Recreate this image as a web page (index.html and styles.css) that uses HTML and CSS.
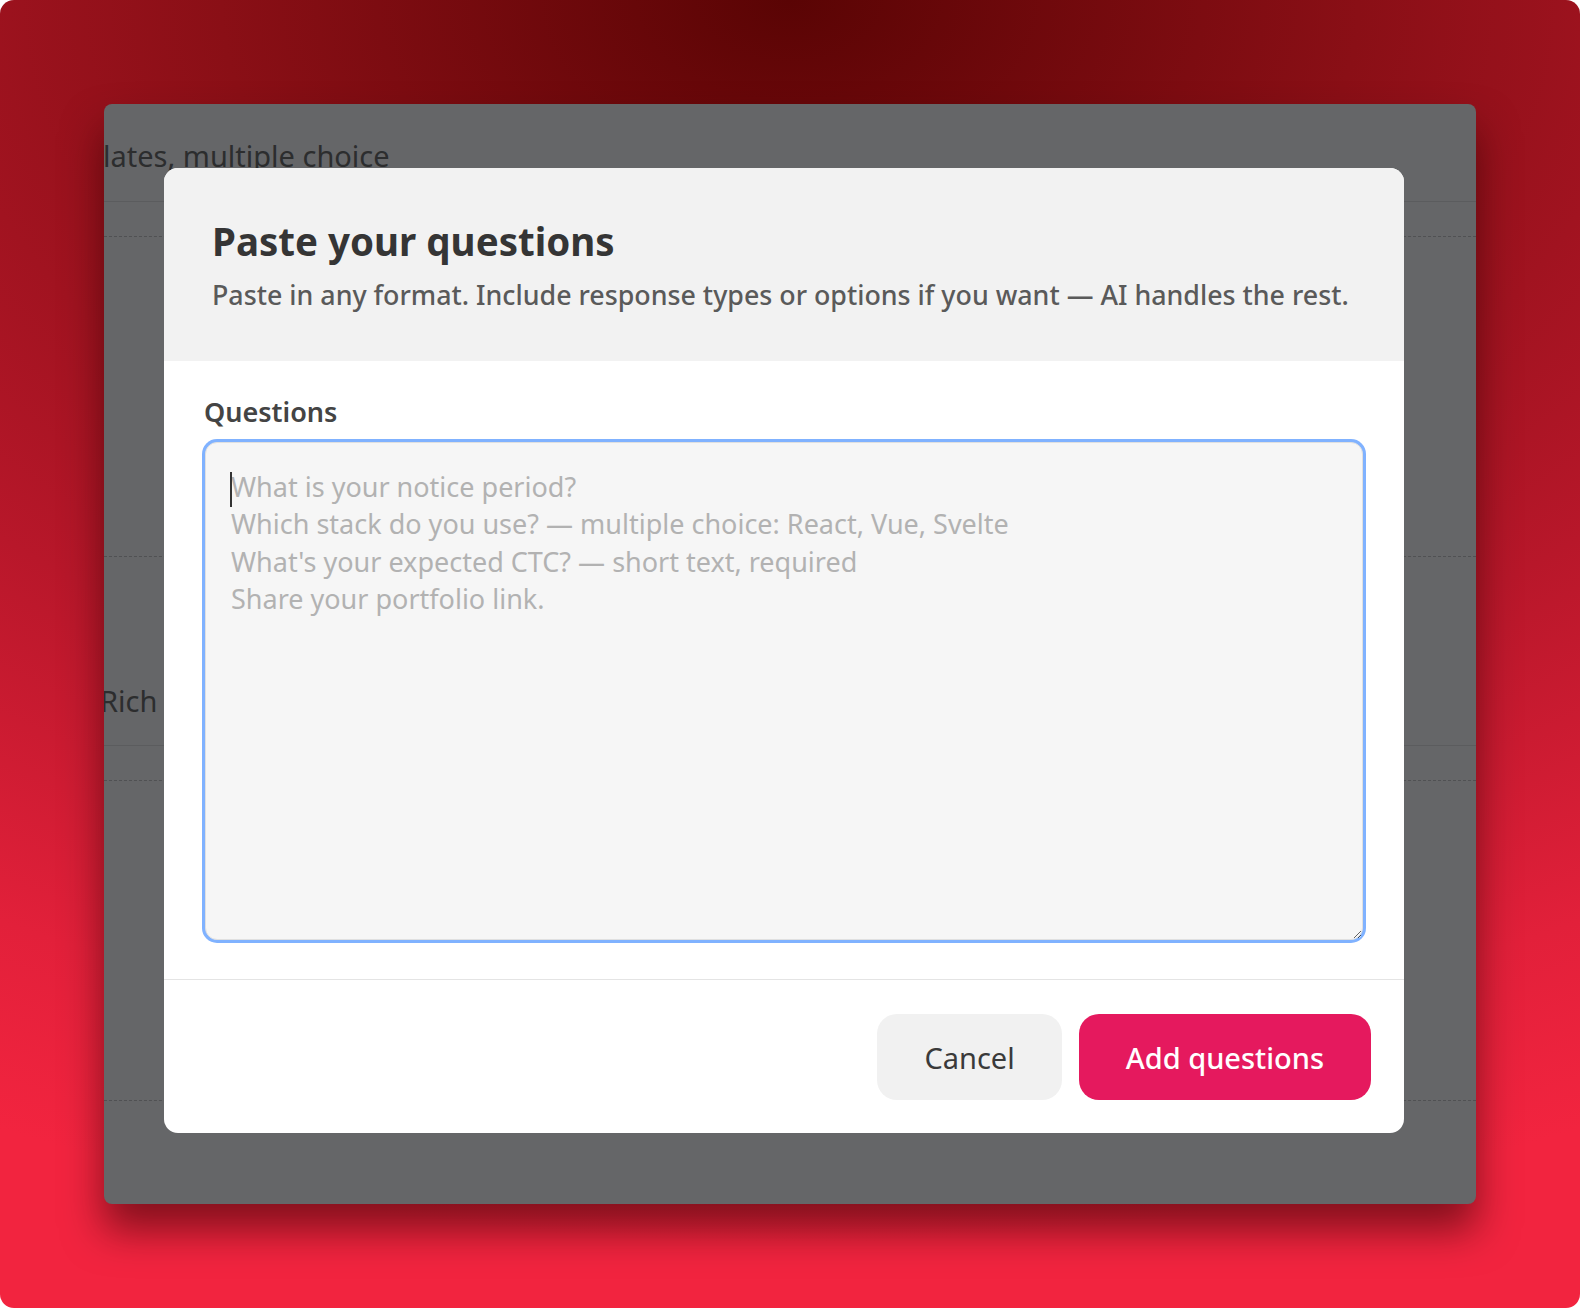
FILE: index.html
```html
<!DOCTYPE html>
<html lang="en">
<head>
  <meta charset="UTF-8">
  <meta name="viewport" content="width=device-width, initial-scale=1.0">
  <title>Paste your questions</title>
  <link rel="stylesheet" href="styles.css">
</head>
<body>
  <div class="frame">
    <div class="window">
      <!-- page behind the dialog, dimmed -->
      <div class="page">
        <div class="page-row first">lates, multiple choice</div>
        <div class="page-block"></div>
        <div class="page-row second">Rich text</div>
        <div class="page-block"></div>
      </div>

      <div class="modal">
        <div class="modal-head">
          <h1>Paste your questions</h1>
          <p>Paste in any format. Include response types or options if you want — AI handles the rest.</p>
        </div>

        <div class="modal-body">
          <label for="questions">Questions</label>
          <div class="field">
            <textarea id="questions" placeholder="What is your notice period?&#10;Which stack do you use? — multiple choice: React, Vue, Svelte&#10;What's your expected CTC? — short text, required&#10;Share your portfolio link."></textarea>
            <span class="caret"></span>
          </div>
        </div>

        <div class="modal-foot">
          <button class="btn btn-cancel">Cancel</button>
          <button class="btn btn-add">Add questions</button>
        </div>
      </div>
    </div>
  </div>
</body>
</html>
```

FILE: styles.css
```css
* {
  box-sizing: border-box;
}
html, body {
  margin: 0;
  background: #fff;
}
body {
  font-family: "Noto Sans", "Open Sans", sans-serif;
}
.frame {
  width: 1580px;
  height: 1308px;
  border-radius: 14px;
  padding: 104px;
  background: radial-gradient(ellipse 120% 95% at 50% 0%, #5a0404 0%, #8a0f16 30%, #b8172a 60%, #e2203a 85%, #f2243f 100%);
}
.window {
  position: relative;
  height: 1100px;
  background: #656668;
  border-radius: 8px;
  box-shadow: 0 26px 40px rgba(40, 0, 0, 0.55);
}
.page {
  height: 100%;
  overflow: hidden;
  border-radius: 8px;
  color: #2c2d2e;
  font-size: 29px;
}
.page-row {
  line-height: 40px;
  border-bottom: 1px solid #5b5c5e;
}
.page-row.first {
  padding: 32px 0 25px;
  margin-left: -1px;
}
.page-row.second {
  padding: 124px 0 24px;
  margin-left: -4px;
}
.page-block {
  margin-top: 34px;
  height: 321px;
  border-top: 1px dashed #505153;
  border-bottom: 1px dashed #505153;
}

/* dialog */
.modal {
  position: absolute;
  left: 60px;
  top: 64px;
  width: 1240px;
  background: #fff;
  border-radius: 14px;
  overflow: hidden;
}
.modal-head {
  background: #f2f2f2;
  padding: 48px 24px 46px 48px;
}
.modal-head h1 {
  margin: 0;
  font-size: 38.5px;
  line-height: 50px;
  font-weight: 700;
  color: #353535;
}
.modal-head p {
  margin: 9px 0 0;
  font-size: 26.8px;
  line-height: 40px;
  font-weight: 500;
  color: #5a5a5a;
  white-space: nowrap;
}
.modal-body {
  padding: 33px 38px 36px;
  border-bottom: 1px solid #e4e4e4;
}
.modal-body label {
  display: block;
  font-size: 27px;
  line-height: 36px;
  font-weight: 600;
  color: #444;
  margin: 0 0 12px 2px;
}
.field {
  position: relative;
}
.field textarea {
  display: block;
  width: calc(100% - 6px);
  margin: 3px;
  height: 498px;
  padding: 25px;
  border: 1px solid #e0e0e0;
  border-radius: 12px;
  box-shadow: 0 0 0 3px #80b2ff;
  background: #f6f6f6;
  font-family: inherit;
  font-size: 27px;
  line-height: 37.33px;
  color: #333;
  outline: none;
}
.field textarea::placeholder {
  color: #b2b2b2;
}
.caret {
  position: absolute;
  left: 28px;
  top: 30px;
  width: 2px;
  height: 35px;
  background: #333;
}
.modal-foot {
  display: flex;
  justify-content: flex-end;
  gap: 17px;
  padding: 34px 33px 33px;
}
.btn {
  height: 86px;
  padding: 0 47px;
  border: 0;
  border-radius: 20px;
  font-family: inherit;
  font-size: 29px;
  cursor: pointer;
}
.btn-cancel {
  background: #f1f1f1;
  color: #3a3a3a;
}
.btn-add {
  background: #e5195e;
  color: #fff;
  font-weight: 500;
}
```
